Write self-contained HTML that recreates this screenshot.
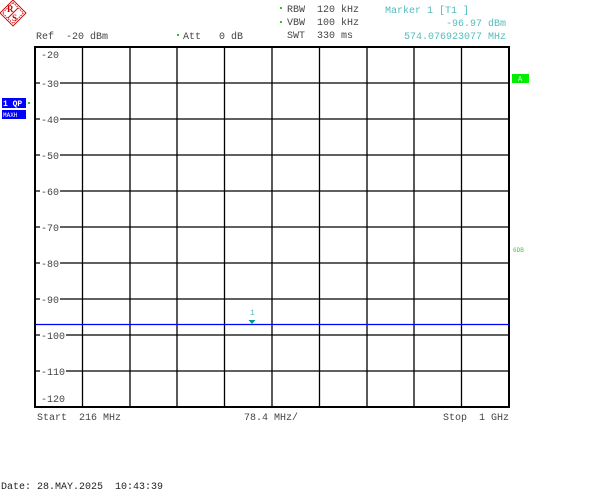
<!DOCTYPE html>
<html><head><meta charset="utf-8"><style>
html,body{margin:0;padding:0;background:#fff;}
body{width:605px;height:502px;overflow:hidden;position:relative;}
svg{position:absolute;left:0;top:0;}
text{white-space:pre;}
</style></head><body>
<svg width="605" height="502" viewBox="0 0 605 502" font-family="Liberation Mono, monospace" font-size="10" xml:space="preserve">
<!-- logo -->
<g transform="translate(13,13)" stroke="#c00" fill="none" stroke-width="0.9">
<polygon points="0,-13 13,0 0,13 -13,0"/>
<polygon points="0,-10.5 10.5,0 0,10.5 -10.5,0" stroke-dasharray="1.5 1"/>
<text x="-6" y="-1" fill="#c00" stroke="none" font-family="Liberation Serif, serif" font-size="9" font-weight="bold">R</text>
<text x="-1" y="8" fill="#c00" stroke="none" font-family="Liberation Serif, serif" font-size="9" font-weight="bold">S</text>
<line x1="-5" y1="5" x2="5" y2="-5"/>
</g>
<!-- header -->
<text x="36" y="39" fill="#444">Ref  -20 dBm</text>
<rect x="177" y="34" width="2" height="2" fill="#2c2"/>
<text x="183" y="39" fill="#444">Att   0 dB</text>
<rect x="280" y="7" width="2" height="2" fill="#2c2"/>
<text x="287" y="12" fill="#444">RBW  120 kHz</text>
<rect x="280" y="21" width="2" height="2" fill="#2c2"/>
<text x="287" y="25" fill="#444">VBW  100 kHz</text>
<text x="287" y="38" fill="#444">SWT  330 ms</text>
<text x="385" y="13" fill="#5bb">Marker 1 [T1 ]</text>
<text x="506" y="26" fill="#5bb" text-anchor="end">-96.97 dBm</text>
<text x="506" y="39" fill="#5bb" text-anchor="end">574.076923077 MHz</text>
<!-- left badges -->
<rect x="2" y="98" width="24" height="10" fill="#00f"/>
<text x="3" y="106" fill="#fff" font-size="8" font-weight="bold">1 QP</text>
<rect x="28" y="102" width="2" height="2" fill="#2c2"/>
<rect x="2" y="110" width="24" height="9" fill="#00f"/>
<text x="3" y="117" fill="#fff" font-size="6">MAXH</text>
<!-- right badges -->
<rect x="512" y="74" width="17" height="9" fill="#0e0"/>
<text x="518" y="81" fill="#fff" font-size="7">A</text>
<text x="513" y="252" fill="#2d2" font-size="6">6DB</text>
<!-- grid -->
<g stroke="#000" stroke-width="1.3">
<line x1="82.5" y1="47" x2="82.5" y2="407"/>
<line x1="130" y1="47" x2="130" y2="407"/>
<line x1="177" y1="47" x2="177" y2="407"/>
<line x1="224.5" y1="47" x2="224.5" y2="407"/>
<line x1="272" y1="47" x2="272" y2="407"/>
<line x1="319.5" y1="47" x2="319.5" y2="407"/>
<line x1="367" y1="47" x2="367" y2="407"/>
<line x1="414" y1="47" x2="414" y2="407"/>
<line x1="461.5" y1="47" x2="461.5" y2="407"/>
<line x1="35" y1="83" x2="509" y2="83"/>
<line x1="35" y1="119" x2="509" y2="119"/>
<line x1="35" y1="155" x2="509" y2="155"/>
<line x1="35" y1="191" x2="509" y2="191"/>
<line x1="35" y1="227" x2="509" y2="227"/>
<line x1="35" y1="263" x2="509" y2="263"/>
<line x1="35" y1="299" x2="509" y2="299"/>
<line x1="35" y1="335" x2="509" y2="335"/>
<line x1="35" y1="371" x2="509" y2="371"/>
</g>
<rect x="35" y="47" width="474" height="360" fill="none" stroke="#000" stroke-width="2"/>
<!-- y labels -->
<g fill="#444">
<rect x="40" y="78" width="20" height="10" fill="#fff"/>
<rect x="40" y="114" width="20" height="10" fill="#fff"/>
<rect x="40" y="150" width="20" height="10" fill="#fff"/>
<rect x="40" y="186" width="20" height="10" fill="#fff"/>
<rect x="40" y="222" width="20" height="10" fill="#fff"/>
<rect x="40" y="258" width="20" height="10" fill="#fff"/>
<rect x="40" y="294" width="20" height="10" fill="#fff"/>
<rect x="40" y="330" width="26" height="10" fill="#fff"/>
<rect x="40" y="366" width="26" height="10" fill="#fff"/>
<text x="41" y="58">-20</text>
<text x="41" y="87">-30</text>
<text x="41" y="123">-40</text>
<text x="41" y="159">-50</text>
<text x="41" y="195">-60</text>
<text x="41" y="231">-70</text>
<text x="41" y="267">-80</text>
<text x="41" y="303">-90</text>
<text x="41" y="339">-100</text>
<text x="41" y="375">-110</text>
<text x="41" y="402">-120</text>
</g>
<!-- trace -->
<line x1="36" y1="324.5" x2="509" y2="324.5" stroke="#00f" stroke-width="1.3"/>
<polygon points="248.5,320 255.5,320 252,324" fill="#099"/>
<text x="250" y="315" fill="#5bb" font-size="8">1</text>
<!-- footer -->
<text x="37" y="420" fill="#444">Start  216 MHz</text>
<text x="244" y="420" fill="#444">78.4 MHz/</text>
<text x="443" y="420" fill="#444">Stop  1 GHz</text>
<text x="1" y="489" fill="#222">Date: 28.MAY.2025  10:43:39</text>
</svg>
</body></html>
